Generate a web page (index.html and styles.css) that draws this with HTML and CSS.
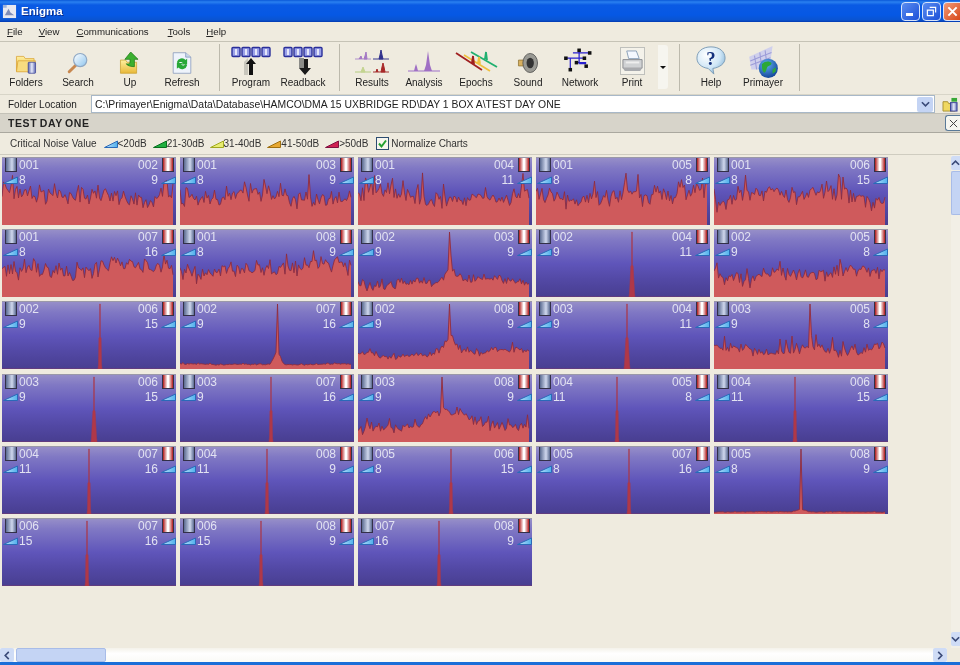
FILE: index.html
```html
<!DOCTYPE html>
<html lang="en">
<head>
<meta charset="utf-8">
<title>Enigma</title>
<link rel="stylesheet" href="styles.css">
</head>
<body>
<svg class="defs" aria-hidden="true">
  <defs>
    <linearGradient id="gFolder" x1="0" y1="0" x2="0" y2="1"><stop offset="0" stop-color="#fff0a0"/><stop offset="1" stop-color="#e8b838"/></linearGradient>
    <linearGradient id="gGlass" x1="0" y1="0" x2="1" y2="1"><stop offset="0" stop-color="#ffffff"/><stop offset="1" stop-color="#8cc4ee"/></linearGradient>
    <linearGradient id="gCyl" x1="0" y1="0" x2="1" y2="0"><stop offset="0" stop-color="#5a64b0"/><stop offset=".5" stop-color="#e8ecfa"/><stop offset="1" stop-color="#5a64b0"/></linearGradient>
    <radialGradient id="gBubble" cx=".35" cy=".3" r=".8"><stop offset="0" stop-color="#ffffff"/><stop offset=".6" stop-color="#cfe6f6"/><stop offset="1" stop-color="#7fb0d4"/></radialGradient>
    <radialGradient id="gGlobe" cx=".4" cy=".3" r=".8"><stop offset="0" stop-color="#60b0f0"/><stop offset="1" stop-color="#0a3a90"/></radialGradient>
    <linearGradient id="gTri" x1="0" y1="0" x2="1" y2="0"><stop offset="0" stop-color="#c4e4fb"/><stop offset="1" stop-color="#4fb0ec"/></linearGradient>
    <symbol id="chips" viewBox="0 0 40 12">
      <g fill="#9aa0e8" stroke="#2a2f9a" stroke-width="1.4">
        <rect x="1" y="1.5" width="8" height="9" rx="1"/><rect x="11" y="1.5" width="8" height="9" rx="1"/><rect x="21" y="1.5" width="8" height="9" rx="1"/><rect x="31" y="1.5" width="8" height="9" rx="1"/>
      </g>
      <g fill="#e4e6fa"><rect x="4" y="3" width="2" height="6"/><rect x="14" y="3" width="2" height="6"/><rect x="24" y="3" width="2" height="6"/><rect x="34" y="3" width="2" height="6"/></g>
    </symbol>
  </defs>
</svg>

<div class="app">
  <header class="titlebar">
    <svg class="appicon" viewBox="0 0 16 16"><rect x="1" y="1" width="14" height="14" fill="#e8e8f0"/><path d="M3 12 L7 5 L9 9 L13 12 Z" fill="#7f8db8"/><rect x="1" y="1" width="4" height="3" fill="#9fb4dc"/></svg>
    <span class="apptitle">Enigma</span>
    <div class="winbtns">
      <button class="winbtn"><span class="wmin"></span></button>
      <button class="winbtn"><svg viewBox="0 0 12 12" class="wico"><path d="M4 1.5h6.500v5.500M1.500 4.500h6.500v6h-6.500z" fill="none" stroke="#fff" stroke-width="1.300"/></svg></button>
      <button class="winbtn winclose"><svg viewBox="0 0 12 12" class="wico"><path d="M1.500 1.500L10.500 10.500M10.500 1.500L1.500 10.500" stroke="#fff" stroke-width="2.200"/></svg></button>
    </div>
  </header>

  <nav class="menubar">
    <span class="menu m-file"><u>F</u>ile</span>
    <span class="menu m-view"><u>V</u>iew</span>
    <span class="menu m-comm"><u>C</u>ommunications</span>
    <span class="menu m-tools"><u>T</u>ools</span>
    <span class="menu m-help"><u>H</u>elp</span>
  </nav>

  <div class="toolbar">
    <div class="group g1">
      <div class="tool">
        <svg class="ico ico-s" viewBox="0 0 30 30"><path d="M2 6h10l2 3h12v17H2z" fill="url(#gFolder)" stroke="#d8a030"/><path d="M4 12h24l-4 15H2z" fill="#f8dc80" stroke="#d8a030"/><rect x="18" y="14" width="10" height="15" rx="1" fill="url(#gCyl)" stroke="#3a4298"/></svg>
        <span class="tlabel">Folders</span>
      </div>
      <div class="tool">
        <svg class="ico ico-s" viewBox="0 0 30 30"><path d="M3 27L12 18" stroke="#c88850" stroke-width="4" stroke-linecap="round"/><circle cx="18" cy="11" r="9" fill="url(#gGlass)" stroke="#8fa8c4" stroke-width="1.600"/></svg>
        <span class="tlabel">Search</span>
      </div>
      <div class="tool">
        <svg class="ico ico-s" viewBox="0 0 30 30"><path d="M2 11h7l2 3h13v15H2z" fill="url(#gFolder)" stroke="#c8a030"/><path d="M16 0l10 10h-5v10c-4 0-10-1-11-4 3 1 5 0 5-2v-4H8z" fill="#3cb030" stroke="#207818"/></svg>
        <span class="tlabel">Up</span>
      </div>
      <div class="tool">
        <svg class="ico ico-s" viewBox="0 0 30 30"><path d="M3 1h17l7 6v22H3z" fill="#eef3fb" stroke="#7f93b8"/><path d="M20 1v6h7" fill="#c8d6ea" stroke="#7f93b8"/><path d="M8 14a7 7 0 0 1 12-3l2-2v8h-8l2-2a3.500 3.500 0 0 0-6 1z" fill="#28a838"/><path d="M22 18a7 7 0 0 1-12 3l-2 2v-8h8l-2 2a3.500 3.500 0 0 0 6-1z" fill="#28a838"/></svg>
        <span class="tlabel">Refresh</span>
      </div>
    </div>
    <div class="group g2">
      <div class="tool">
        <svg class="ico" viewBox="0 0 40 30"><use href="#chips" x="0" y="1" width="40" height="12"/><path d="M13 17l4-4v17h-4z" fill="#c8c6bc"/><path d="M20 13l5 6h-3v11h-4V19h-3z" fill="#111"/></svg>
        <span class="tlabel">Program</span>
      </div>
      <div class="tool">
        <svg class="ico" viewBox="0 0 40 30"><use href="#chips" x="0" y="1" width="40" height="12"/><rect x="16" y="13" width="5" height="10" fill="#8c8c88"/><path d="M21 14h4v9h3l-6 7-6-7h5z" fill="#1a1a1a"/></svg>
        <span class="tlabel">Readback</span>
      </div>
    </div>
    <div class="group g3">
      <div class="tool">
        <svg class="ico" viewBox="0 -3 36 30"><g stroke-width="1"><path d="M1 11h16" stroke="#b090cc"/><path d="M5 11l2-3 1 3M10 11l1-3 1-4 1 7z" fill="#a478c4" stroke="#a478c4"/><path d="M19 11h16" stroke="#3a3a90"/><path d="M25 11l1-4 1-5 1 5 1 4z" fill="#30308c" stroke="#30308c"/><path d="M1 24h16" stroke="#b4cc80"/><path d="M7 24l2-5 2 5z" fill="#c4d490" stroke="#c4d490"/><path d="M19 24h16" stroke="#a03030"/><path d="M22 24l1-3 1 3M27 24l1-5 1-4 1 4 1 5z" fill="#a82828" stroke="#a82828"/></g></svg>
        <span class="tlabel">Results</span>
      </div>
      <div class="tool">
        <svg class="ico" viewBox="0 -1 36 30"><path d="M2 25h32" stroke="#b898d0" stroke-width="1.500"/><path d="M8 25l1-4 1-3 1 3 1 4zM18 25l2-6 1-7 1-7 1 7 1 7 2 6z" fill="#a070c4"/></svg>
        <span class="tlabel">Analysis</span>
      </div>
      <div class="tool">
        <svg class="ico" viewBox="0 0 44 30"><g fill="none" stroke-width="1.800"><path d="M17 7L43 22M31 14l1-7 1 8" stroke="#20b070"/><path d="M10 10L36 26M24 18l1-6 1 7" stroke="#f0c040"/><path d="M2 8L28 25M18 18l1-7 1 8" stroke="#a02020"/></g></svg>
        <span class="tlabel">Epochs</span>
      </div>
      <div class="tool">
        <svg class="ico ico-s" viewBox="0 0 30 30"><path d="M2 11h8l8-8v24l-8-8H2z" fill="#d8b060" stroke="#8a7030"/><ellipse cx="18" cy="15" rx="10" ry="13" fill="#9a9a94" stroke="#444"/><ellipse cx="18" cy="15" rx="5" ry="7" fill="#333"/></svg>
        <span class="tlabel">Sound</span>
      </div>
      <div class="tool">
        <svg class="ico" viewBox="0 -1 38 34"><g stroke="#2a20d0" stroke-width="1.400" fill="none"><path d="M18 5v15M11 8h19M2 14h22M8 14v14M18 20h8M14 19h12"/></g><g fill="#111"><rect x="16" y="3" width="4" height="4"/><rect x="28" y="6" width="4" height="4"/><rect x="1" y="12" width="4" height="4"/><rect x="22" y="12" width="4" height="4"/><rect x="6" y="25" width="4" height="4"/><rect x="13" y="17" width="4" height="4"/><rect x="24" y="21" width="4" height="4"/></g></svg>
        <span class="tlabel">Network</span>
      </div>
      <div class="tool">
        <span class="pressed"><svg class="ico-p" viewBox="0 0 24 26"><path d="M6 2h10l3 8H8z" fill="#f4f8ff" stroke="#8aa0b8"/><path d="M2 11h20v9H2z" fill="#d0d2d4" stroke="#8a8c90"/><path d="M2 20h20l-2 3H4z" fill="#a8aaae"/><rect x="5" y="13" width="14" height="2" fill="#eeeeee"/></svg></span>
        <span class="tlabel">Print</span>
      </div>
      <div class="dropbtn"><span class="caret"></span></div>
    </div>
    <div class="group g4">
      <div class="tool">
        <svg class="ico" viewBox="0 0 32 32"><path d="M16 2C7 2 1 7 1 14c0 6 5 10 12 11l6 6-1-6c7-1 13-5 13-11C31 7 25 2 16 2z" fill="url(#gBubble)" stroke="#7a9ab4"/><text x="16" y="21" class="qmark">?</text></svg>
        <span class="tlabel">Help</span>
      </div>
      <div class="tool">
        <svg class="ico ico-over" viewBox="0 0 32 32"><path d="M3 11l22-10-3 22H5z" fill="#d0d0ec"/><g stroke="#9c9cd8" stroke-width="1" fill="none"><path d="M4 15l20-8M4 19l19-7M8 10l2 13M13 7l2 16M18 5l2 16"/></g><circle cx="21" cy="22" r="9" fill="url(#gGlobe)"/><path d="M15 18c3-3 7-3 9-1 0 3-3 2-4 4s-1 5-3 5c-2-2-2-5-2-8zM25 23l3-2 0 4-3 2z" fill="#2ca838"/></svg>
        <span class="tlabel">Primayer</span>
      </div>
    </div>
  </div>

  <div class="addressrow">
    <label class="addrlabel">Folder Location</label>
    <div class="addrbox">
      <span class="addrtext">C:\Primayer\Enigma\Data\Database\HAMCO\DMA 15 UXBRIDGE RD\DAY 1 BOX A\TEST DAY ONE</span>
      <span class="combo"><svg viewBox="0 0 10 6" class="chev"><path d="M1 1l4 4 4-4" fill="none" stroke="#3a4a78" stroke-width="1.800"/></svg></span>
    </div>
    <svg class="addricon" viewBox="0 0 18 16"><path d="M1 5h5l1 2h7v8H1z" fill="#f0d860" stroke="#a89030"/><rect x="10" y="1" width="6" height="4" fill="#38a838"/><rect x="9" y="6" width="7" height="9" fill="url(#gCyl)" stroke="#3a4298"/></svg>
  </div>

  <div class="sectionbar">
    <span class="sectiontitle">TEST DAY ONE</span>
    <span class="closex"><svg viewBox="0 0 10 10" class="xico"><path d="M1 1l8 8M9 1l-8 8" stroke="#444" stroke-width="1.100"/></svg></span>
  </div>

  <div class="legend">
    <span class="crit">Critical Noise Value</span>
    <span class="lg"><svg class="ltri" viewBox="0 0 14 8"><path d="M.5 7.500L13.500 1V7.500z" class="t-blue"/></svg>&lt;20dB</span>
    <span class="lg lg-g"><svg class="ltri" viewBox="0 0 14 8"><path d="M.5 7.500L13.500 1V7.500z" class="t-green"/></svg>21-30dB</span>
    <span class="lg"><svg class="ltri" viewBox="0 0 14 8"><path d="M.5 7.500L13.500 1V7.500z" class="t-yellow"/></svg>31-40dB</span>
    <span class="lg"><svg class="ltri" viewBox="0 0 14 8"><path d="M.5 7.500L13.500 1V7.500z" class="t-orange"/></svg>41-50dB</span>
    <span class="lg"><svg class="ltri" viewBox="0 0 14 8"><path d="M.5 7.500L13.500 1V7.500z" class="t-red"/></svg>&gt;50dB</span>
    <span class="check"><svg viewBox="0 0 13 13" class="checkbox"><rect x=".5" y=".5" width="12" height="12" fill="#f6f6ee" stroke="#2c4c70"/><path d="M3 6.500l2.500 3L10 3.500" fill="none" stroke="#22a030" stroke-width="2"/></svg>Normalize Charts</span>
  </div>

  <div class="workarea">
    <main class="grid" id="grid"></main>
    <aside class="vscroll">
      <span class="sbtn"><svg viewBox="0 0 10 6" class="chev"><path d="M1 5l4-4 4 4" fill="none" stroke="#3a4a78" stroke-width="1.800"/></svg></span>
      <span class="vthumb"></span>
      <span class="vspace"></span>
      <span class="sbtn"><svg viewBox="0 0 10 6" class="chev"><path d="M1 1l4 4 4-4" fill="none" stroke="#3a4a78" stroke-width="1.800"/></svg></span>
    </aside>
  </div>

  <div class="hscroll">
    <span class="hbtn"><svg viewBox="0 0 6 10" class="chevh"><path d="M5 1L1 5l4 4" fill="none" stroke="#3a4a78" stroke-width="1.800"/></svg></span>
    <span class="hthumb"></span>
    <span class="hspace"></span>
    <span class="hbtn"><svg viewBox="0 0 6 10" class="chevh"><path d="M1 1l4 4-4 4" fill="none" stroke="#3a4a78" stroke-width="1.800"/></svg></span>
    <span class="hcorner"></span>
  </div>
  <div class="bottomedge"></div>
</div>
<script src="charts.js"></script>
</body>
</html>
```
FILE: styles.css
```css
* { box-sizing: border-box; }
html, body { margin: 0; padding: 0; height: 100%; overflow: hidden; background: #efebdf; }
body { font-family: "Liberation Sans", Arial, sans-serif; font-size: 10px; color: #2a2a2a; }
.defs { position: absolute; width: 0; height: 0; }
.app { width: 960px; height: 665px; display: flex; flex-direction: column; filter: blur(.35px); }

.titlebar { height: 22px; flex: none; display: flex; align-items: center; padding: 0 0 0 2px; background: linear-gradient(#0a58d8 0, #2a80f0 2px, #0a5ae4 5px, #0658e4 15px, #0a54d0 20px, #0238b0 22px); }
.appicon { width: 15px; height: 15px; }
.apptitle { margin-left: 4px; color: #fff; font-weight: bold; font-size: 11.5px; text-shadow: 1px 1px 0 #0a2f90; }
.winbtns { margin-left: auto; display: flex; gap: 2px; padding-right: 0; }
.winbtn { width: 19px; height: 19px; padding: 0; border: 1px solid #d8e4fa; border-radius: 4px; background: linear-gradient(135deg, #5a8cf0, #1c50d8); display: flex; align-items: center; justify-content: center; }
.winclose { background: linear-gradient(135deg, #f09a78, #d84818); width: 17px; border-right: 0; border-radius: 4px 0 0 4px; }
.wmin { width: 7px; height: 3px; background: #fff; margin-top: 7px; margin-right: 2px; }
.wico { width: 11px; height: 11px; }

.menubar { height: 20px; flex: none; display: flex; align-items: center; border-bottom: 1px solid #c6c3b6; background: #efebdf; }
.menu { color: #222; font-size: 9.7px; }
.m-file { margin-left: 7px; }
.m-view { margin-left: 16px; }
.m-comm { margin-left: 17px; }
.m-tools { margin-left: 19px; }
.m-help { margin-left: 16px; }

.toolbar { height: 53px; flex: none; display: flex; background: #efebdf; padding-top: 2px; align-items: stretch; border-bottom: 1px solid #d8d5c8; }
.group { display: flex; height: 47px; border-right: 1px solid #bcb9ac; }
.g1 { width: 220px; }
.g2 { width: 115px; margin-left: 5px; }
.g3 { width: 334px; margin-left: 6px; }
.g4 { width: 115px; margin-left: 5px; }
.tool { width: 52px; display: flex; flex-direction: column; align-items: center; justify-content: flex-end; padding-bottom: 2px; }
.ico { height: 30px; width: 46px; margin-bottom: 1px; }
.ico-s { height: 22px; margin-bottom: 2px; }
.ico-over { height: 34px; margin-bottom: -3px; position: relative; z-index: 1; }
.ico-p { width: 23px; height: 25px; }
.pressed { width: 25px; height: 28px; border: 1px solid #bfc0bc; background: #f4f2ea; display: flex; align-items: center; justify-content: center; margin-bottom: 1px; }
.tlabel { line-height: 13px; height: 13px; color: #222; white-space: nowrap; }
.dropbtn { width: 10px; height: 44px; margin-top: 1px; background: #f6f5ef; border-radius: 0 3px 3px 0; display: flex; align-items: center; justify-content: center; }
.caret { width: 0; height: 0; border-left: 3px solid transparent; border-right: 3px solid transparent; border-top: 3px solid #111; }
.qmark { font: bold 20px "Liberation Serif", serif; fill: #14307c; text-anchor: middle; }

.addressrow { height: 18px; flex: none; display: flex; align-items: center; background: #efebdf; }
.addrlabel { width: 91px; padding-left: 8px; color: #222; }
.addrbox { width: 844px; height: 18px; border: 1px solid #a8b8c8; background: #fff; display: flex; align-items: center; padding-left: 3px; }
.addrtext { color: #222; white-space: nowrap; font-size: 10.4px; }
.combo { margin-left: auto; margin-right: 1px; width: 16px; height: 15px; background: #c4d4f4; border-radius: 2px; display: flex; align-items: center; justify-content: center; }
.chev { width: 9px; height: 6px; }
.addricon { width: 17px; height: 15px; margin-left: 7px; }

.sectionbar { height: 20px; flex: none; display: flex; align-items: center; justify-content: space-between; background: #d7d4ca; border-top: 1px solid #c4c2b8; border-bottom: 1px solid #aaa89f; }
.sectiontitle { margin-left: 8px; font-weight: bold; font-size: 10.5px; letter-spacing: .6px; word-spacing: -1px; color: #222; }
.closex { width: 15px; height: 16px; border: 1px solid #5a7a98; border-right: 0; border-radius: 3px 0 0 3px; background: #f6f6f0; display: flex; align-items: center; justify-content: center; }
.xico { width: 9px; height: 9px; }

.legend { height: 22px; flex: none; display: flex; align-items: center; padding-left: 10px; background: #efebdf; color: #333; border-bottom: 1px solid #cfccc0; }
.crit { margin-right: 7px; }
.lg { display: flex; align-items: center; margin-right: 6px; }
.lg-g { margin-right: 5px; }
.ltri { width: 14px; height: 8px; margin-right: 0; }
.t-blue { fill: url(#gTri); stroke: #2a6ab8; stroke-width: 1; }
.t-green { fill: #20b040; stroke: #0a7020; stroke-width: 1; }
.t-yellow { fill: #e8ec70; stroke: #a0a820; stroke-width: 1; }
.t-orange { fill: #e8a830; stroke: #a07010; stroke-width: 1; }
.t-red { fill: #d02050; stroke: #801040; stroke-width: 1; }
.check { display: flex; align-items: center; gap: 2px; margin-left: 2px; letter-spacing: -.05px; }
.checkbox { width: 13px; height: 13px; }

.workarea { flex: 1; min-height: 0; display: flex; background: #efebdf; }
.grid { flex: 1; display: grid; grid-template-columns: repeat(5, 174px); grid-auto-rows: 68px; gap: 4.2px 4px; padding: 2px 0 0 2px; align-content: start; }
.card { position: relative; background: linear-gradient(#968ec8 0, #8078c4 15%, #5f55ba 50%, #5248a4 75%, #483e90 100%); border-top: 1px solid #9a98a8; overflow: hidden; }
.plot { display: block; width: 174px; height: 67px; }
.fill { fill: #cf5a5c; stroke: none; }
.line { fill: none; stroke: #8c2a3c; stroke-width: .85; }
.spikefill { fill: #b03848; stroke: #a83848; stroke-width: .5; }
.tag { position: absolute; color: #e2e2f2; font-size: 12px; line-height: 14px; }
.tl { left: 17px; top: 0; }
.tr { right: 18px; top: 0; }
.ml { left: 17px; top: 15px; }
.mr { right: 18px; top: 15px; }
.cyl { position: absolute; top: -1px; width: 12px; height: 15px; border: 1px solid #333048; }
.cyl-a { left: 3px; background: linear-gradient(90deg, #5a6a90, #d0d8ee 60%, #5a6a90); }
.cyl-b { right: 2px; background: linear-gradient(90deg, #b01818, #fff 45%, #ffffff 55%, #b01818); }
.tri { position: absolute; top: 18px; width: 15px; height: 8px; }
.tri-a { left: 1px; }
.tri-b { right: 0; }

.vscroll { width: 9px; flex: none; display: flex; flex-direction: column; background: #f2efe6; padding: 1px 0 2px; }
.sbtn { height: 14px; flex: none; background: #cfdcf6; border-radius: 2px 0 0 2px; display: flex; align-items: center; justify-content: center; }
.vthumb { height: 44px; margin-top: 1px; flex: none; background: #c4d4f4; border: 1px solid #a8bce8; border-right: 0; border-radius: 2px 0 0 2px; }
.vspace { flex: 1; }
.hscroll { height: 14px; flex: none; display: flex; align-items: stretch; background: linear-gradient(#f4f2ea, #fff 40%, #fafaf6); }
.hbtn { width: 14px; flex: none; background: #cfdcf6; border-radius: 2px; display: flex; align-items: center; justify-content: center; }
.hthumb { width: 90px; margin-left: 2px; flex: none; background: #c4d4f4; border: 1px solid #a8bce8; border-radius: 2px; }
.hspace { flex: 1; }
.hcorner { width: 13px; flex: none; background: #efebdf; }
.chevh { width: 6px; height: 9px; }
.bottomedge { flex: none; height: 3px; background: #1a6ed8; }
```
FILE: charts.js
```js
// Pairs of loggers and the correlation trace each one shows.
// base: resting level (0 top..1 bottom), amp: noise, peak: x of main spike, hump: rise round the spike.
var N = function (p, b, amp) { return { base: b || 0.57, amp: amp || 0.15, peak: p, noisy: true }; };
var S = function (p) { return { peak: p }; };
var cards = [
  ["001","002",8,9,N()],["001","003",8,9,N()],["001","004",8,11,N()],["001","005",8,8,N()],["001","006",8,15,N()],
  ["001","007",8,16,N()],["001","008",8,9,N()],
  ["002","003",9,9,{base:.8,amp:.08,peak:91,noisy:true,hump:.18,tail:.1,wide:5}],["002","004",9,11,{peak:96,skirt:1}],["002","005",9,8,N(undefined,.66,.12)],
  ["002","006",9,15,{peak:98}],["002","007",9,16,{base:.93,amp:.012,peak:97,noisy:true,hump:.2,wide:3}],["002","008",9,9,{base:.78,amp:.07,peak:91,noisy:true,hump:.2,tail:.08,wide:5}],
  ["003","004",9,11,{peak:91,skirt:1}],["003","005",9,8,{base:.72,amp:.1,peak:95,noisy:true,hump:.05}],
  ["003","006",9,15,{peak:92,skirt:1}],["003","007",9,16,S(91)],["003","008",9,9,{base:.78,amp:.08,peak:84,noisy:true,hump:.24,wide:18}],
  ["004","005",11,8,S(81)],["004","006",11,15,S(81)],
  ["004","007",11,16,S(87)],["004","008",11,9,S(87)],["005","006",8,15,S(93)],["005","007",8,16,S(93)],["005","008",8,9,{base:.97,amp:.006,peak:87,noisy:true,hump:.04,wide:4}],
  ["006","007",15,16,S(85)],["006","008",15,9,S(81)],["007","008",16,9,S(81)]
];

function rng(seed) {
  return function () {
    seed = (seed + 0x6D2B79F5) | 0;
    var t = Math.imul(seed ^ (seed >>> 15), 1 | seed);
    t = (t + Math.imul(t ^ (t >>> 7), 61 | t)) ^ t;
    return ((t ^ (t >>> 14)) >>> 0) / 4294967296;
  };
}

function trace(c, seed) {
  var W = 172, H = 67, r = rng(seed * 7919 + 13), pts = [], x, y;
  if (!c.noisy) {
    var p = c.peak, s = c.skirt ? 1 : 0;
    return [[0, 67], [p - 2 - s, 67], [p - 1.5 - s, 62], [p - 1.1, 36], [p - .3, 35], [p - .3, 2], [p + .3, 2], [p + .3, 35], [p + 1.1, 36], [p + 1.5 + s, 62], [p + 2 + s, 67], [W + 2, 67]];
  }
  var ph = r() * 6, ph2 = r() * 6, step = 1.5, spiked = false;
  for (x = 0; x <= W; x += step) {
    var slow = 0.35 * Math.sin(x / 31 + ph) + 0.3 * Math.sin(x / 13 + ph2);
    var u = (r() + r() + r()) / 1.5 - 1;
    var v = c.base + c.amp * (slow + u * 1.35);
    if (r() < 0.07) v -= c.amp * (0.6 + r() * 1.3);
    if (c.peak !== undefined && c.hump) {
      var d = x - c.peak, w = c.wide || 12;
      var side = (d > 0 && c.tail) ? c.tail * Math.exp(-d / 55) : 0;
      v -= c.hump * Math.exp(-d * d / (2 * w * w)) + side;
    }
    if (c.peak !== undefined && !spiked && x >= c.peak) { v = 0.03; spiked = true; }
    y = Math.max(0.02, Math.min(0.985, v)) * H;
    pts.push([x, y]);
  }
  return pts;
}

function pathOf(pts) {
  return pts.map(function (p, i) { return (i ? "L" : "M") + p[0].toFixed(1) + " " + p[1].toFixed(1); }).join("");
}

var tri = '<path d="M.5 7.500L14.500 1V7.500z" class="t-blue"/>';
var html = cards.map(function (c, i) {
  var pts = trace(c[4], i + 1), d = pathOf(pts);
  var last = pts[pts.length - 1][0], first = pts[0][0];
  var area = d + "L" + last + " 68L" + first + " 68Z";
  var shapes = c[4].noisy
    ? '<path class="fill" d="' + area + '"/><path class="line" d="' + d + '"/>'
    : '<path class="spikefill" d="' + area + '"/>';
  return '<article class="card"><svg class="plot" viewBox="0 0 174 67">' + shapes + "</svg>" +
    '<span class="cyl cyl-a"></span><span class="tag tl">' + c[0] + "</span>" +
    '<span class="tag tr">' + c[1] + '</span><span class="cyl cyl-b"></span>' +
    '<svg class="tri tri-a" viewBox="0 0 15 8">' + tri + '</svg><span class="tag ml">' + c[2] + "</span>" +
    '<span class="tag mr">' + c[3] + '</span><svg class="tri tri-b" viewBox="0 0 15 8">' + tri + "</svg></article>";
}).join("");
document.getElementById("grid").innerHTML = html;
```
